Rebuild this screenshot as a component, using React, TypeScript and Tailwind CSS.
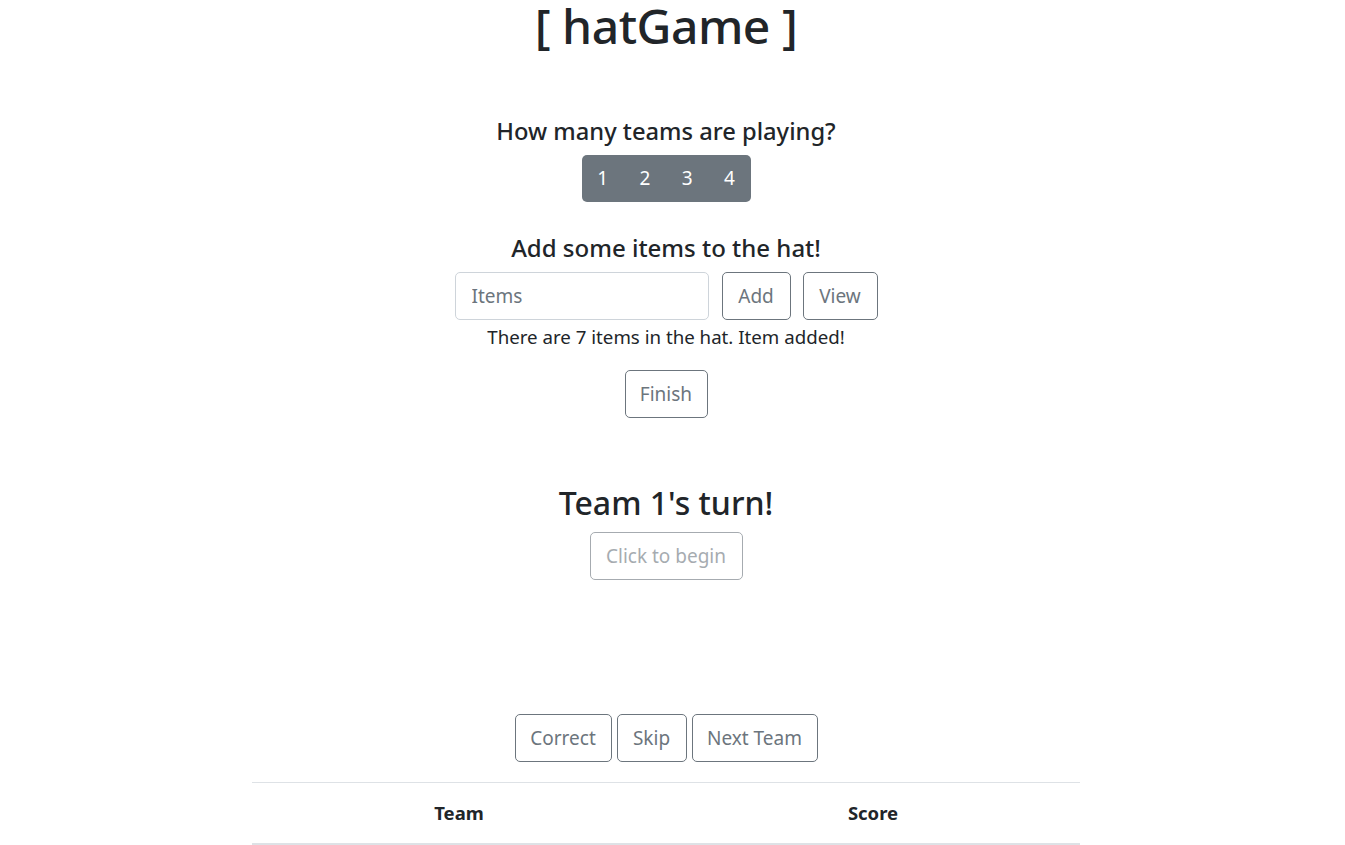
import React from "react";

const font = { fontFamily: '"Noto Sans", "Open Sans", sans-serif' };

function OutlineBtn({ children, className = "", disabled = false }: { children: React.ReactNode; className?: string; disabled?: boolean }) {
  return (
    <button
      className={
        "h-[48px] rounded-[5px] border border-[#6c757d] text-[19px] text-[#6c757d] bg-white " +
        (disabled ? "opacity-60 " : "") +
        className
      }
    >
      {children}
    </button>
  );
}

export default function App() {
  return (
    <div className="h-[845px] overflow-hidden bg-white text-[#212529]" style={font}>
      <div className="w-[1332px] flex flex-col items-center">
        <h1 className="text-[48px] leading-[52px] font-medium tracking-[-0.5px]">[ hatGame ]</h1>

        <h4 className="mt-[65px] text-[23.7px] leading-[28px] font-medium">How many teams are playing?</h4>
        <div className="mt-[10px] flex h-[47px] w-[169px] rounded-[5px] bg-[#6c757d] text-white text-[19px]">
          {[1, 2, 3, 4].map((n) => (
            <button key={n} className="flex-1 flex items-center justify-center">
              {n}
            </button>
          ))}
        </div>

        <h4 className="mt-[32px] text-[24px] leading-[28px] font-medium">Add some items to the hat!</h4>
        <div className="mt-[10px] flex items-center">
          <input
            placeholder="Items"
            className="w-[254px] h-[48px] rounded-[5px] border border-[#ced4da] px-4 text-[19px] placeholder-[#6c757d] outline-none"
          />
          <OutlineBtn className="ml-[13px] w-[69px]">Add</OutlineBtn>
          <OutlineBtn className="ml-[12px] w-[75px]">View</OutlineBtn>
        </div>
        <p className="mt-[3px] text-[18.7px] leading-[27px]">There are 7 items in the hat. Item added!</p>
        <OutlineBtn className="mt-[20px] w-[83px] h-[47px]">Finish</OutlineBtn>

        <h2 className="mt-[65px] text-[32px] leading-[40px] font-medium">Team 1's turn!</h2>
        <OutlineBtn className="mt-[9px] w-[153px] h-[47px]" disabled>
          Click to begin
        </OutlineBtn>

        <div className="mt-[134px] flex gap-[5px]">
          <OutlineBtn className="w-[97px]">Correct</OutlineBtn>
          <OutlineBtn className="w-[70px]">Skip</OutlineBtn>
          <OutlineBtn className="w-[126px]">Next Team</OutlineBtn>
        </div>

        <table className="mt-[20px] w-[828px] border-collapse">
          <thead>
            <tr className="border-t border-[#dee2e6] border-b-2">
              <th className="w-1/2 h-[61px] text-[18.5px] font-bold text-center">Team</th>
              <th className="w-1/2 h-[61px] text-[18.5px] font-bold text-center">Score</th>
            </tr>
          </thead>
        </table>
      </div>
    </div>
  );
}
